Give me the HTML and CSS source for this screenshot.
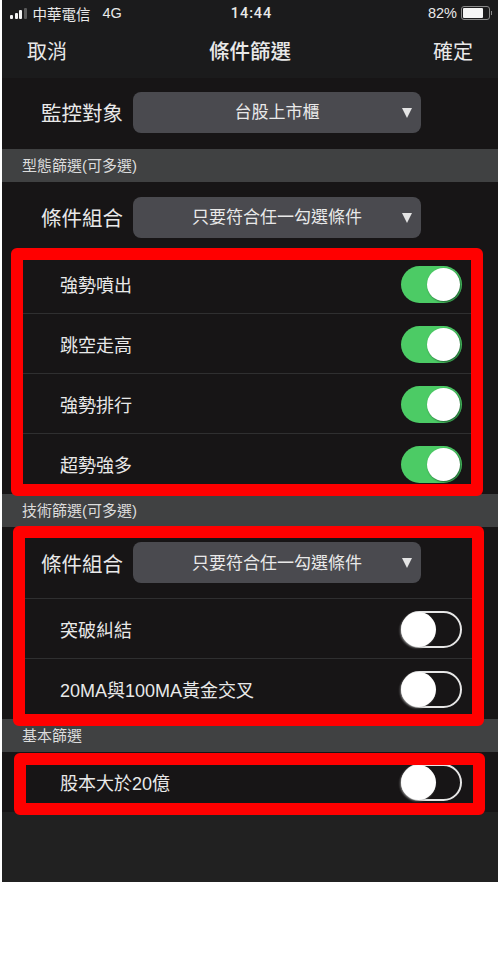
FILE: index.html
```html
<!DOCTYPE html>
<html lang="zh-Hant">
<head>
  <meta charset="UTF-8">
  <meta name="viewport" content="width=device-width, initial-scale=1.0">
  <title>條件篩選</title>
  <link rel="stylesheet" href="styles.css">
</head>
<body>

<div class="phone">
  <div class="status-bar">
    <div class="status-left">
      <div class="signal">
        <span class="bar bar1"></span>
        <span class="bar bar2"></span>
        <span class="bar bar3"></span>
        <span class="bar bar4"></span>
      </div>
      <span class="carrier">中華電信</span>
      <span class="network">4G</span>
    </div>
    <div class="status-time">14:44</div>
    <div class="status-right">
      <span>82%</span>
      <div class="battery"><div class="battery-level"></div></div>
      <div class="battery-tip"></div>
    </div>
  </div>

  <div class="nav-bar">
    <span>取消</span>
    <span class="nav-title">條件篩選</span>
    <span>確定</span>
  </div>

  <div class="select-row monitor-row">
    <span class="select-label">監控對象</span>
    <div class="select-box">
      <span class="select-text">台股上市櫃</span>
      <span class="select-arrow"></span>
    </div>
  </div>

  <div class="section-title">型態篩選(可多選)</div>
  <div class="select-row combo-row">
    <span class="select-label">條件組合</span>
    <div class="select-box">
      <span class="select-text">只要符合任一勾選條件</span>
      <span class="select-arrow"></span>
    </div>
  </div>
  <div class="switch-row">
    <span>強勢噴出</span>
    <div class="switch on"><div class="knob"></div></div>
  </div>
  <div class="switch-row">
    <span>跳空走高</span>
    <div class="switch on"><div class="knob"></div></div>
  </div>
  <div class="switch-row">
    <span>強勢排行</span>
    <div class="switch on"><div class="knob"></div></div>
  </div>
  <div class="switch-row last">
    <span>超勢強多</span>
    <div class="switch on"><div class="knob"></div></div>
  </div>

  <div class="section-title">技術篩選(可多選)</div>
  <div class="select-row combo-row2">
    <span class="select-label">條件組合</span>
    <div class="select-box">
      <span class="select-text">只要符合任一勾選條件</span>
      <span class="select-arrow"></span>
    </div>
  </div>
  <div class="switch-row">
    <span>突破糾結</span>
    <div class="switch"><div class="knob"></div></div>
  </div>
  <div class="switch-row last">
    <span>20MA與100MA黃金交叉</span>
    <div class="switch"><div class="knob"></div></div>
  </div>

  <div class="section-title">基本篩選</div>
  <div class="switch-row last">
    <span>股本大於20億</span>
    <div class="switch"><div class="knob"></div></div>
  </div>

  <!-- red marks drawn over the screenshot -->
  <div class="mark mark1"></div>
  <div class="mark mark2"></div>
  <div class="mark mark3"></div>
</div>

</body>
</html>
```

FILE: styles.css
```css
html, body {
  margin: 0;
  background-color: #ffffff;
}

body {
  height: 967px;
  overflow: hidden;
  font-family: "Liberation Sans", "Noto Sans CJK TC", sans-serif;
  color: #e9e9e9;
}

.phone {
  position: relative;
  width: 496px;
  height: 882px;
  margin: 0 2px;
  background-color: #212121;
  overflow: hidden;
}

/* status bar */
.status-bar {
  height: 26px;
  padding: 0 6px 0 8px;
  display: flex;
  align-items: center;
  justify-content: space-between;
  background-color: #1b1b1c;
  font-size: 14.5px;
}

.status-left, .status-right {
  width: 150px;
  display: flex;
  align-items: center;
}

.status-right {
  justify-content: flex-end;
}

.signal {
  display: flex;
  align-items: flex-end;
  gap: 1.5px;
  height: 11px;
  margin-right: 6px;
}

.bar {
  width: 3px;
  background-color: #f2f2f2;
  border-radius: 1px;
}

.bar1 { height: 4px; }
.bar2 { height: 6px; }
.bar3 { height: 9px; }
.bar4 { height: 11px; background-color: #5a5a5a; }

.network {
  margin-left: 12px;
}

.status-time {
  font-family: Roboto, sans-serif;
  font-weight: 500;
  letter-spacing: 0.9px;
  margin-left: 1px;
}

.battery {
  width: 25px;
  height: 10px;
  margin-left: 4px;
  padding: 1px;
  border: 1px solid #8a8a8a;
  border-radius: 3px;
  box-sizing: content-box;
}

.battery-level {
  width: 82%;
  height: 100%;
  background-color: #f5f5f5;
  border-radius: 1px;
}

.battery-tip {
  width: 1px;
  height: 4px;
  margin-left: 1px;
  background-color: #8a8a8a;
}

/* nav bar */
.nav-bar {
  height: 52px;
  padding: 0 25px 4px;
  box-sizing: border-box;
  display: flex;
  align-items: center;
  justify-content: space-between;
  background-color: #1b1b1c;
  font-size: 20px;
}

.nav-title {
  font-size: 20.5px;
  font-weight: 500;
}

/* rows */
.select-row {
  position: relative;
  display: flex;
  align-items: center;
  padding-left: 39px;
  background-color: #171516;
  box-sizing: border-box;
}

.monitor-row { height: 71px; padding-bottom: 3px; }
.combo-row { height: 72px; padding-bottom: 2px; }
.combo-row2 { height: 72px; padding-bottom: 1px; }

.select-label {
  font-size: 20.5px;
  width: 92px;
  flex-shrink: 0;
  line-height: 28px;
  margin-top: 4px;
}

.select-box {
  position: relative;
  width: 288px;
  height: 41px;
  border-radius: 8px;
  background-color: #4a4a4f;
  display: flex;
  align-items: center;
  justify-content: center;
}

.select-text {
  font-size: 17px;
  margin-top: -3px;
}

.select-arrow {
  position: absolute;
  right: 9px;
  top: 16px;
  border-left: 5px solid transparent;
  border-right: 5px solid transparent;
  border-top: 10px solid #e4e4e4;
}

.section-title {
  height: 33px;
  line-height: 33px;
  padding-left: 20px;
  background-color: #404142;
  font-size: 15px;
  color: #dcdcdc;
}

.switch-row {
  position: relative;
  height: 60px;
  padding: 0 36px 0 58px;
  box-sizing: border-box;
  display: flex;
  align-items: center;
  justify-content: space-between;
  background-color: #171516;
  font-size: 18px;
}

/* separators stop short of the screen edges */
.switch-row::after, .combo-row2::after {
  content: "";
  position: absolute;
  left: 12px;
  right: 20px;
  bottom: 0;
  height: 1px;
  background-color: #2f2f30;
}

.switch-row.last::after {
  display: none;
}

/* toggles */
.switch {
  position: relative;
  width: 61px;
  height: 37px;
  border-radius: 19px;
  box-sizing: border-box;
  border: 2px solid #e6e6e6;
}

.switch .knob {
  position: absolute;
  left: -2px;
  top: -1px;
  width: 35px;
  height: 35px;
  border-radius: 50%;
  background-color: #ffffff;
  box-shadow: -1px 1px 2px rgba(150, 150, 150, 0.8);
}

.switch.on {
  border: none;
  background-color: #4ccb65;
}

.switch.on .knob {
  left: 26px;
  top: 2px;
  width: 33px;
  height: 33px;
  box-shadow: 1px 1px 2px rgba(20, 70, 35, 0.8);
}

/* red outlines */
.mark {
  position: absolute;
  box-sizing: border-box;
  border: 12px solid #ff0000;
  border-radius: 6px;
}

.mark1 { left: 9px; top: 248px; width: 472px; height: 248px; }
.mark2 { left: 11px; top: 526px; width: 471px; height: 200px; }
.mark3 { left: 12px; top: 753px; width: 471px; height: 62px; }
```
